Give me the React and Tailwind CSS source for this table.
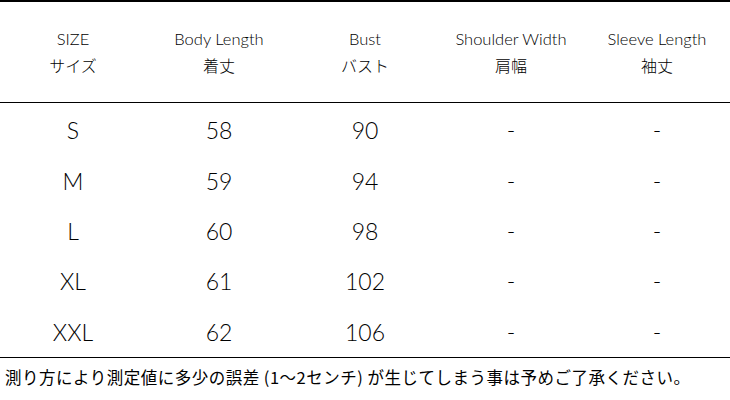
import React from "react";

const headers = [
  ["SIZE", "サイズ"],
  ["Body Length", "着丈"],
  ["Bust", "バスト"],
  ["Shoulder Width", "肩幅"],
  ["Sleeve Length", "袖丈"],
];

const rows = [
  ["S", "58", "90", "-", "-"],
  ["M", "59", "94", "-", "-"],
  ["L", "60", "98", "-", "-"],
  ["XL", "61", "102", "-", "-"],
  ["XXL", "62", "106", "-", "-"],
];

const en = { fontFamily: 'Lato, "Noto Sans CJK JP", sans-serif' };
const jp = { fontFamily: '"Noto Sans CJK JP", sans-serif' };

export default function App() {
  return (
    <div className="w-[730px] h-[400px] bg-white text-black overflow-hidden">
      <div className="border-t-2 border-black h-[102px] grid grid-cols-5 items-center">
        {headers.map(([e, j]) => (
          <div key={e} className="flex flex-col items-center pt-[2px]">
            <div className="text-[16.5px] leading-[20px] font-light" style={en}>{e}</div>
            <div className="text-[16px] leading-[24px] mt-[4px] font-light" style={jp}>{j}</div>
          </div>
        ))}
      </div>
      <div className="border-t border-black border-b-[1.5px] h-[256px] flex flex-col pt-[2px]">
        {rows.map((r) => (
          <div key={r[0]} className="grid grid-cols-5 h-[50.5px] items-center">
            {r.map((c, i) => (
              <div key={i} className="text-center text-[23px] leading-[28px] font-light" style={en}>{c}</div>
            ))}
          </div>
        ))}
      </div>
      <div className="pl-[5px] pt-[7px] text-[16.5px] leading-[24px] tracking-[0.5px] whitespace-nowrap font-normal" style={jp}>
        測り方により測定値に多少の誤差 (1〜2センチ) が生じてしまう事は予めご了承ください。
      </div>
    </div>
  );
}
